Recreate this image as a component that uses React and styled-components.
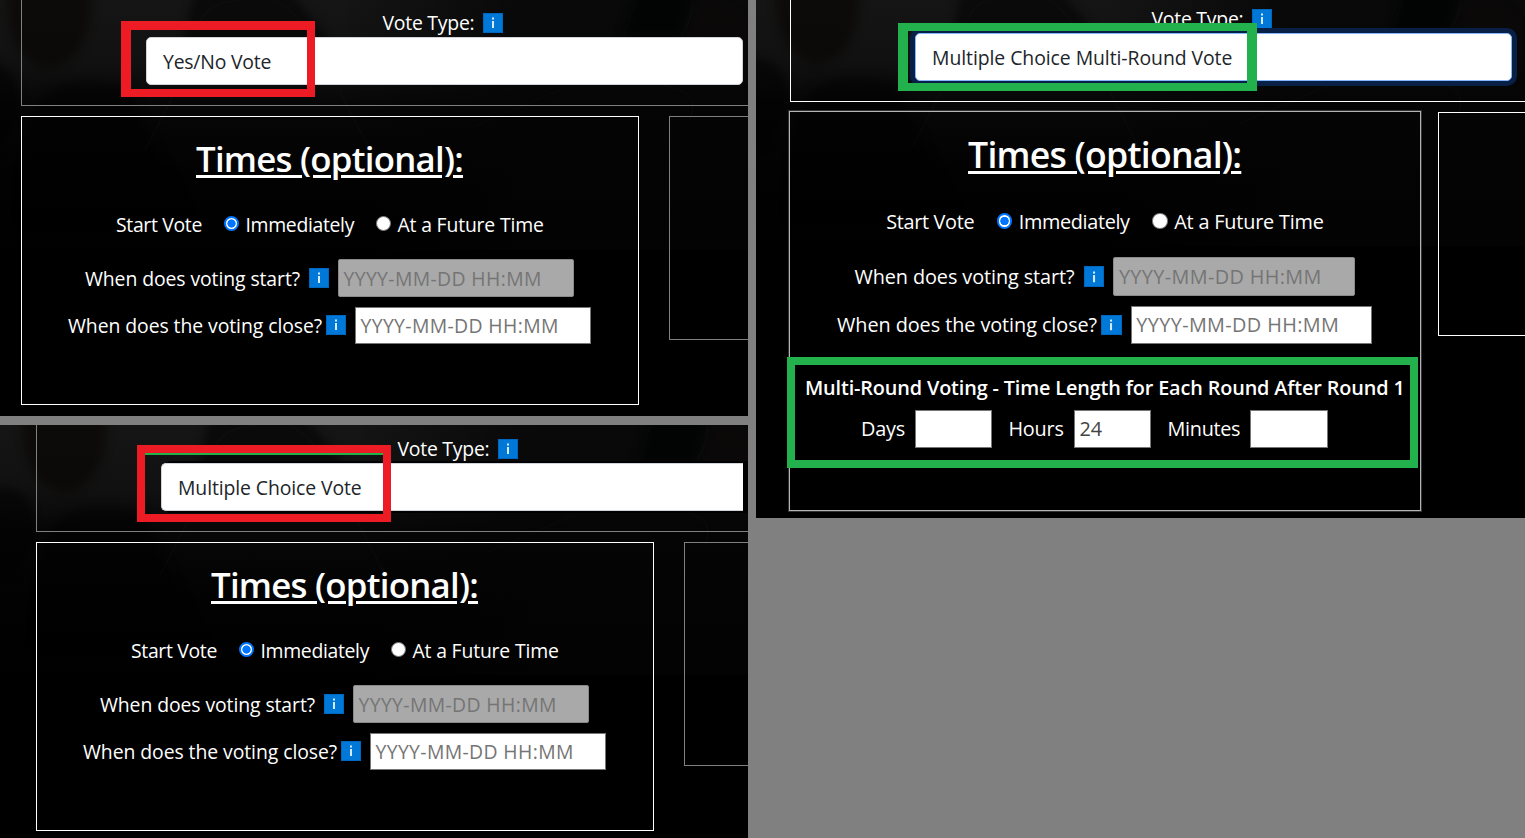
import React from "react";
import styled, { createGlobalStyle } from "styled-components";

const GlobalStyle = createGlobalStyle`
  *, *::before, *::after { box-sizing: border-box; }
  body {
    margin: 0;
    background: #808080;
    color: #fff;
    font-family: "Open Sans", "Noto Sans", sans-serif;
    font-size: 19.4px;
    line-height: 30px;
    overflow: hidden;
  }
`;

const Board = styled.main`
  display: grid;
  grid-template-columns: 748px 769px;
  column-gap: 8px;
  align-items: start;
  width: 1525px;
  height: 838px;
  overflow: hidden;
`;

const Column = styled.div`
  display: flex;
  flex-direction: column;
  gap: 9px;
`;

const Panel = styled.section`
  position: relative;
  isolation: isolate;
  height: ${(p) => p.$height}px;
  padding-left: ${(p) => p.$inset}px;
  overflow: hidden;
  background: #000;
`;

const BackdropArt = styled.svg`
  position: absolute;
  z-index: -1;
  top: ${(p) => p.$top}px;
  left: ${(p) => p.$left}px;
  overflow: visible;
`;

const TypeCard = styled.div`
  display: flex;
  flex-direction: column;
  height: ${(p) => p.$height}px;
  padding: ${(p) => p.$top}px 0 0 124px;
  border: solid ${(p) => (p.$bright ? "#fff" : "#808080")};
  border-width: 0 0 1px 1px;
`;

const LabelText = styled.span`
  flex: none;
  width: ${(p) => p.$width}px;
  padding-top: 2px;
  letter-spacing: ${(p) => p.$tracking || 0}px;
  white-space: nowrap;
`;

const TypeLabel = styled.div`
  display: flex;
  align-items: center;
  gap: 9px;
  height: 30px;
  padding: 2px 0 0 236.5px;

  ${LabelText} { padding-top: 0; }
`;

const InfoBadge = styled.span`
  flex: none;
  display: grid;
  place-items: center;
  width: 20px;
  height: 20px;
  border: 1px solid #0067c0;
  background: #0078d7;
`;

const SelectBox = styled.div`
  flex: none;
  width: ${(p) => p.$width}px;
  height: 48px;
  padding: 9px 16px 7px;
  border: 1px solid ${(p) => (p.$focused ? "#86b7fe" : "#ced4da")};
  border-right-width: ${(p) => (p.$cut ? 0 : 1)}px;
  border-radius: ${(p) => (p.$cut ? "5px 0 0 5px" : "5px")};
  background: #fff;
  color: #212529;
  letter-spacing: ${(p) => p.$tracking}px;
  box-shadow: ${(p) =>
    p.$focused ? "0 0 0 5px rgb(8, 31, 70)" : p.$cut ? "5px 0 0 2px #000" : "none"};
`;

const CardRow = styled.div`
  display: flex;
  align-items: flex-start;
  gap: ${(p) => p.$gap}px;
  margin: ${(p) => `${p.$top}px 0 0 ${p.$shift || 0}px`};
`;

const TimesCard = styled.div`
  flex: none;
  zoom: ${(p) => p.$zoom || 1};
  width: ${(p) => p.$width || 618}px;
  height: ${(p) => p.$height}px;
  padding-top: 20px;
  border: 1px solid ${(p) => (p.$soft ? "#b4b4b4" : "#fff")};
  box-shadow: ${(p) => (p.$soft ? "0 0 0 1px #333" : "none")};
`;

const NextCard = styled.div`
  flex: 1;
  height: 224px;
  margin-top: ${(p) => p.$drop || 0}px;
  border: solid ${(p) => (p.$bright ? "#fff" : "#808080")};
  border-width: 1px 0 1px 1px;
`;

const Title = styled.h2`
  height: 48px;
  margin: 0;
  padding-left: 174px;
  font-size: 34.8px;
  font-weight: 600;
  line-height: 44px;
  letter-spacing: -0.75px;
  white-space: nowrap;
  text-decoration: underline;
  text-decoration-thickness: 3px;
  text-underline-offset: 3px;
`;

const StartRow = styled.div`
  display: flex;
  align-items: center;
  height: 30px;
  margin: 24px 0 0 94px;
`;

const Choice = styled.label`
  display: flex;
  align-items: center;
  gap: 6.5px;
  margin-left: 22px;

  & + & { margin-left: 21.5px; }
`;

const Radio = styled.span`
  flex: none;
  width: 15px;
  height: 15px;
  margin-top: -1px;
  border-radius: 50%;
  border: ${(p) => (p.$on ? "2px solid #0075ff" : "1px solid #767676")};
  background: ${(p) =>
    p.$on ? "radial-gradient(circle, #0075ff 3.8px, #fff 4.4px)" : "#fff"};
`;

const FieldRow = styled.div`
  display: flex;
  align-items: center;
  height: 38px;
  margin: ${(p) => `${p.$top}px 0 0 ${p.$left}px`};
`;

const IconGap = styled.span`
  display: flex;
  margin: ${(p) => `0 9px 0 ${p.$before}px`};
`;

const TextInput = styled.div`
  flex: none;
  display: flex;
  align-items: center;
  width: ${(p) => p.$width || 236}px;
  height: ${(p) => (p.$disabled ? 38 : 37)}px;
  padding: 2px 4.5px 0;
  border: 1px solid ${(p) => (p.$disabled ? "#8a8a8a" : "#767676")};
  border-radius: ${(p) => (p.$disabled ? 2 : 0)}px;
  background: ${(p) => (p.$disabled ? "#a9a9a9" : "#fff")};
  color: ${(p) => (p.$value ? "#444" : "#757575")};
  letter-spacing: ${(p) => (p.$value ? -0.1 : 0.36)}px;
  white-space: nowrap;
`;

const RoundHeading = styled.div`
  height: 30px;
  margin: 28px 0 0 14.6px;
  font-weight: 600;
  letter-spacing: -0.14px;
  white-space: nowrap;
`;

const RoundFields = styled.div`
  display: flex;
  align-items: center;
  gap: 9.5px;
  margin: 6px 0 0 69.5px;
`;

const Unit = styled.div`
  display: flex;
  align-items: center;
  gap: 9.5px;

  & + & { margin-left: 6.5px; }
`;

const Highlight = styled.div`
  position: absolute;
  left: ${(p) => p.$x}px;
  top: ${(p) => p.$y}px;
  width: ${(p) => p.$w}px;
  height: ${(p) => p.$h}px;
  border: solid ${(p) => p.$color};
  border-width: ${(p) => p.$edge};
`;

const HighlightTrace = styled.div`
  height: 2px;
  background: #22b14c;
`;

const RED = "#ed1c24";
const GREEN = "#22b14c";

function InfoIcon() {
  return (
    <InfoBadge>
      <svg width="4" height="12" viewBox="0 0 4 12" aria-hidden="true">
        <rect x="1" y="0.5" width="2" height="2" fill="#d7ebfb" />
        <rect x="1" y="4" width="2" height="7" fill="#d7ebfb" />
      </svg>
    </InfoBadge>
  );
}

function Backdrop({ id, left, top }) {
  return (
    <BackdropArt $left={left} $top={top} width="790" height="418" aria-hidden="true">
      <defs>
        <linearGradient id={`${id}-shade`} x1="0" y1="0" x2="0" y2="1">
          <stop offset="0" stopColor="#151515" />
          <stop offset="0.15" stopColor="#111" />
          <stop offset="0.25" stopColor="#070707" />
          <stop offset="0.42" stopColor="#020202" />
          <stop offset="0.6" stopColor="#000" />
        </linearGradient>
        <linearGradient id={`${id}-side`} x1="0" y1="0" x2="1" y2="0">
          <stop offset="0.42" stopColor="#030303" stopOpacity="0" />
          <stop offset="0.64" stopColor="#050404" stopOpacity="0.7" />
        </linearGradient>
        <filter id={`${id}-soft`} colorInterpolationFilters="sRGB" x="-10%" y="-20%" width="120%" height="140%">
          <feGaussianBlur stdDeviation="4" />
        </filter>
      </defs>
      <rect x="-20" width="830" height="418" fill={`url(#${id}-shade)`} />
      <rect width="810" height="250" fill={`url(#${id}-side)`} />
      <g filter={`url(#${id}-soft)`} fill="#000">
        <path d="M8-10H90C94 30 80 66 48 68C20 64 4 30 8-10Z" fill="#080504" fillOpacity="0.6" />
        <path d="M-20 62C16 58 22 90 20 120L0 150H-20Z" fillOpacity="0.5" />
        <path d="M24 130C40 80 70 76 128 86L190 220H20Z" fillOpacity="0.45" />
        <path d="M194-8H290L330 40L300 60H180Z" fillOpacity="0.5" />
        <path d="M634-8H694L680 38H622Z" fill="#010203" fillOpacity="0.8" />
        <path d="M700 0Q730 4 748 24V80L690 50Z" fill="#0c0909" fillOpacity="0.6" />
      </g>
      <g fill="none" stroke="#fff" strokeOpacity="0.025">
        <path d="M200 22C206 8 220 2 240 0M274 0C290 8 300 20 306 30M175 92L145 150M340 92L370 150" />
        <path d="M636-2L624 36M692-2C694 12 688 26 682 34M470 128L560 90M660 84C680 90 700 92 690 120" />
      </g>
    </BackdropArt>
  );
}

function TimesForm({ rounds }) {
  return (
    <>
      <Title>Times (optional):</Title>
      <StartRow>
        <LabelText $width={86} $tracking={-0.32}>Start Vote</LabelText>
        <Choice>
          <Radio $on />
          <LabelText $width={109} $tracking={-0.33}>Immediately</LabelText>
        </Choice>
        <Choice>
          <Radio />
          <LabelText $width={146} $tracking={-0.18}>At a Future Time</LabelText>
        </Choice>
      </StartRow>
      <FieldRow $top={20} $left={63}>
        <LabelText $width={215} $tracking={-0.09}>When does voting start?</LabelText>
        <IconGap $before={9}><InfoIcon /></IconGap>
        <TextInput $disabled>YYYY-MM-DD HH:MM</TextInput>
      </FieldRow>
      <FieldRow $top={9} $left={46}>
        <LabelText $width={254} $tracking={-0.07}>When does the voting close?</LabelText>
        <IconGap $before={4}><InfoIcon /></IconGap>
        <TextInput>YYYY-MM-DD HH:MM</TextInput>
      </FieldRow>
      {rounds && (
        <>
          <RoundHeading>Multi-Round Voting - Time Length for Each Round After Round 1</RoundHeading>
          <RoundFields>
            <Unit>
              <LabelText $width={43} $tracking={-0.2}>Days</LabelText>
              <TextInput $width={75.5} />
            </Unit>
            <Unit>
              <LabelText $width={54.5} $tracking={-0.2}>Hours</LabelText>
              <TextInput $width={75.5} $value>24</TextInput>
            </Unit>
            <Unit>
              <LabelText $width={71.5} $tracking={-0.3}>Minutes</LabelText>
              <TextInput $width={75.5} />
            </Unit>
          </RoundFields>
        </>
      )}
    </>
  );
}

function VoteType() {
  return (
    <TypeLabel>
      <LabelText $width={91.5} $tracking={-0.24}>Vote Type:</LabelText>
      <InfoIcon />
    </TypeLabel>
  );
}

export default function App() {
  return (
    <>
      <GlobalStyle />
      <Board>
        <Column>
          <Panel $height={416} $inset={21}>
            <Backdrop id="yes-no" left={0} top={0} />
            <TypeCard $height={106} $top={7}>
              <VoteType />
              <SelectBox $width={597} $tracking={-0.2}>Yes/No Vote</SelectBox>
            </TypeCard>
            <CardRow $top={10} $gap={30}>
              <TimesCard $height={289}><TimesForm /></TimesCard>
              <NextCard />
            </CardRow>
            <Highlight $x={121} $y={21} $w={194} $h={76} $edge="9px 8px 8px 10px" $color={RED} />
          </Panel>
          <Panel $height={413} $inset={36}>
            <Backdrop id="choice" left={15} top={0} />
            <TypeCard $height={107} $top={8}>
              <VoteType />
              <SelectBox $width={582} $tracking={-0.1} $cut>Multiple Choice Vote</SelectBox>
            </TypeCard>
            <CardRow $top={10} $gap={30}>
              <TimesCard $height={289}><TimesForm /></TimesCard>
              <NextCard />
            </CardRow>
            <Highlight $x={137} $y={20} $w={254} $h={77} $edge="8px" $color={RED}>
              <HighlightTrace />
            </Highlight>
          </Panel>
        </Column>
        <Panel $height={518} $inset={34}>
          <Backdrop id="rounds" left={12} top={-4} />
          <TypeCard $height={102} $top={3} $bright>
            <VoteType />
            <SelectBox $width={597} $tracking={-0.06} $focused>Multiple Choice Multi-Round Vote</SelectBox>
          </TypeCard>
          <CardRow $top={9} $shift={-1} $gap={17}>
            <TimesCard $zoom={1.0233} $width={617.6} $height={391} $soft><TimesForm rounds /></TimesCard>
            <NextCard $drop={1} $bright />
          </CardRow>
          <Highlight $x={142} $y={23} $w={359} $h={68} $edge="8px 10px" $color={GREEN} />
          <Highlight $x={31} $y={357} $w={631} $h={111} $edge="8px" $color={GREEN} />
        </Panel>
      </Board>
    </>
  );
}
